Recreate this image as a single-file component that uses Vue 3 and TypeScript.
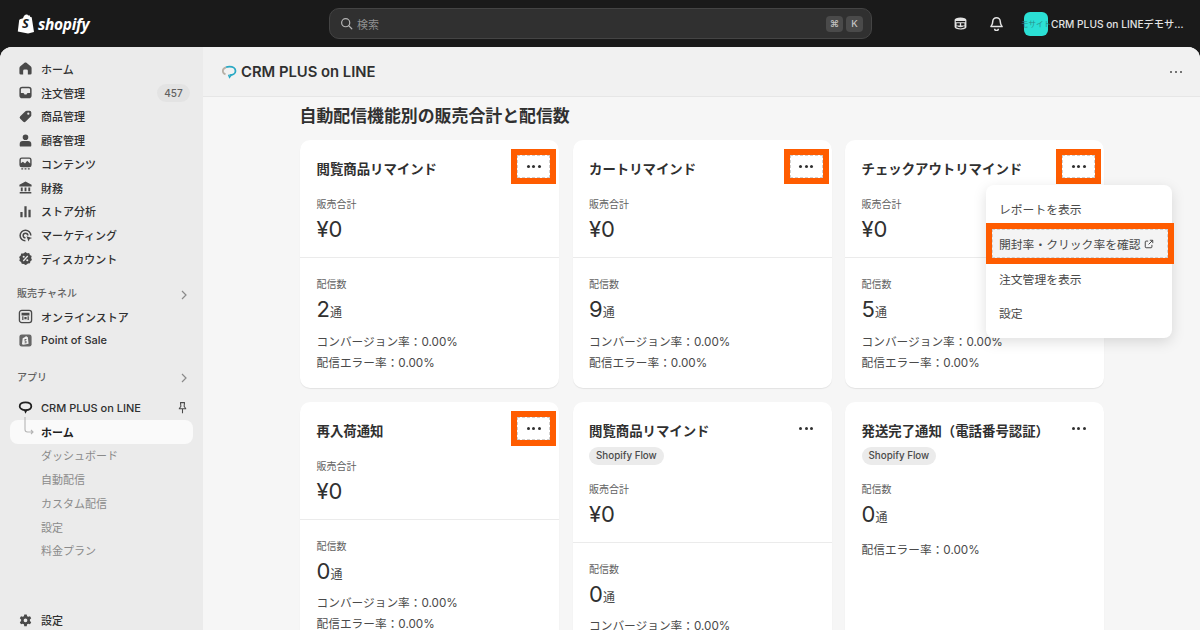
<script setup lang="ts">
interface NavItem { label: string; icon: string; badge?: string }
interface Card {
  title: string
  flow?: boolean
  hl?: boolean
  sales?: boolean
  count: string
  conv?: boolean
  menu?: boolean
}
const icons: Record<string, string> = {
  home: 'M8 1.500c.4 0 .7.1 1 .4l4.500 3.800c.6.5 1 1.200 1 2V13a1.500 1.500 0 0 1-1.500 1.500h-2.500V10.500a1.500 1.500 0 0 0-1.500-1.500H7a1.500 1.500 0 0 0-1.500 1.500v4H3A1.500 1.500 0 0 1 1.500 13V7.700c0-.8.400-1.500 1-2L7 1.900c.3-.3.6-.4 1-.4Z',
  inbox: 'M4.500 1.800h7a3 3 0 0 1 3 3v6.400a3 3 0 0 1-3 3h-7a3 3 0 0 1-3-3V4.800a3 3 0 0 1 3-3Zm0 1.600A1.400 1.400 0 0 0 3.100 4.800v3.700h2.400c.5 0 .9.300 1.100.7l.3.800h2.200l.3-.8c.2-.4.600-.7 1.100-.7h2.400V4.800a1.400 1.400 0 0 0-1.400-1.400Z',
  tag: 'M9.400 1.800h3a1.800 1.800 0 0 1 1.800 1.800v3a2 2 0 0 1-.6 1.400l-5.400 5.400a2 2 0 0 1-2.800 0l-3-3a2 2 0 0 1 0-2.800L7.900 2.400a2 2 0 0 1 1.500-.6Zm1.600 2a1.200 1.200 0 1 0 0 2.400 1.200 1.200 0 0 0 0-2.400Z',
  person: 'M8 1.500a3 3 0 1 1 0 6 3 3 0 0 1 0-6ZM5 8.600h6a3.200 3.200 0 0 1 3.200 3.200v1.400a1.300 1.300 0 0 1-1.300 1.300H3.100a1.300 1.300 0 0 1-1.300-1.300v-1.400A3.200 3.200 0 0 1 5 8.600Z',
  content: 'M4 1.500h8A2.500 2.500 0 0 1 14.500 4v5.500A2.500 2.500 0 0 1 12 12H4a2.500 2.500 0 0 1-2.500-2.500V4A2.500 2.500 0 0 1 4 1.500Zm0 1.500a1 1 0 0 0-1 1v3.800l2.200-1.800 2.300 2 2.300-3L13 8V4a1 1 0 0 0-1-1ZM3.500 13h2v1.500h-2Zm3.500 0h2v1.500H7Zm3.500 0h2v1.500h-2Z',
  bank: 'M8 1.500 14.500 5v1.800h-13V5ZM3 8h2v4H3Zm4 0h2v4H7Zm4 0h2v4h-2ZM1.800 12.800h12.400v1.700H1.800Z',
  chart: 'M2.500 8.500h2.400v5.500H2.500Zm4.300-6h2.400V14H6.800ZM11.100 6h2.400v8h-2.400Z',
  target: 'M8 1.500a6.500 6.500 0 0 1 6.500 6.400h-1.600A4.900 4.900 0 1 0 7.900 12.900v1.600A6.500 6.500 0 0 1 8 1.500Zm0 3.200A3.300 3.300 0 0 1 11.300 8H9.700A1.700 1.700 0 1 0 8 9.700v1.600a3.300 3.300 0 0 1 0-6.600Zm1 4 6 2-2.600 1.100L11.300 14.500Z',
  discount: 'M8 1 9.700 2.400 11.900 2.200 12.700 4.200 14.600 5.300 14 7.500 14.900 9.500 13.200 10.900 12.800 13 10.600 13.200 8.800 14.600 8 15 6.200 13.800 4 13.700 3.300 11.700 1.400 10.500 2 8.300 1.200 6.300 2.900 4.900 3.400 2.700 5.600 2.600ZM6.100 5a1.100 1.100 0 1 0 0 2.200 1.100 1.100 0 0 0 0-2.200Zm3.800 3.800a1.100 1.100 0 1 0 0 2.200 1.100 1.100 0 0 0 0-2.200ZM9.900 4.900 5.100 10.200l1 .9 4.800-5.300Z',
  gear: 'M6.700 1.500h2.600l.4 1.900 1.300.7 1.800-.7 1.300 2.300-1.400 1.300v1.500l1.400 1.300-1.300 2.300-1.800-.7-1.300.7-.4 1.900H6.700l-.4-1.900-1.300-.7-1.800.7-1.300-2.300L3.300 8.500V7L1.900 5.700l1.300-2.300 1.800.7 1.300-.7ZM8 5.800a2 2 0 1 0 0 4 2 2 0 0 0 0-4Z',
}
const mainNav: NavItem[] = [
  { label: 'ホーム', icon: 'home' },
  { label: '注文管理', icon: 'inbox', badge: '457' },
  { label: '商品管理', icon: 'tag' },
  { label: '顧客管理', icon: 'person' },
  { label: 'コンテンツ', icon: 'content' },
  { label: '財務', icon: 'bank' },
  { label: 'ストア分析', icon: 'chart' },
  { label: 'マーケティング', icon: 'target' },
  { label: 'ディスカウント', icon: 'discount' },
]
const subNav = ['ダッシュボード', '自動配信', 'カスタム配信', '設定', '料金プラン']
const cards: Card[] = [
  { title: '閲覧商品リマインド', hl: true, sales: true, count: '2', conv: true },
  { title: 'カートリマインド', hl: true, sales: true, count: '9', conv: true },
  { title: 'チェックアウトリマインド', hl: true, sales: true, count: '5', conv: true, menu: true },
  { title: '再入荷通知', hl: true, sales: true, count: '0', conv: true },
  { title: '閲覧商品リマインド', flow: true, sales: true, count: '0', conv: true },
  { title: '発送完了通知（電話番号認証）', flow: true, count: '0' },
]
</script>

<template>
  <div class="page">
    <header class="topbar">
      <div class="brand">
        <svg class="bag" viewBox="0 0 18 20" width="18" height="20">
          <path fill="#fff" d="M3 5.200 6 4.200C6.500 2 8 .5 9.500.5c1 0 1.400.6 1.700 1l1.200-.2 1 1.600 1.300.4L17 18l-6 1.500L.8 17.500 2.200 6Z" />
        </svg>
        <span class="bag-s">S</span>
        <span class="wordmark">shopify</span>
      </div>
      <div class="search">
        <svg viewBox="0 0 16 16" width="13" height="13" fill="none" stroke="#b5b5b5" stroke-width="1.500">
          <circle cx="7" cy="7" r="5" />
          <path d="m11 11 3.500 3.500" stroke-linecap="round" />
        </svg>
        <span class="search-text">検索</span>
        <span class="keys"><kbd>⌘</kbd><kbd>K</kbd></span>
      </div>
      <div class="top-right">
        <svg class="top-icon" viewBox="0 0 16 16" width="15" height="15">
          <path fill="#e3e3e3" d="M8 1.500c3.600 0 6.300 1 6.300 2.700v7.600c0 1.700-2.700 2.700-6.300 2.700s-6.300-1-6.300-2.700V4.200C1.700 2.500 4.400 1.500 8 1.500Z" />
          <path fill="#1a1a1a" d="M3 5.400h10v1.300H3ZM3.800 7.700h3.500v2.300H3.800Zm4.900 0h3.500v2.300H8.700ZM3.500 11.200l1-.3c1 .7 2.200 1 3.500 1s2.500-.3 3.500-1l1 .3v.8c-1.200.8-2.800 1.200-4.500 1.200s-3.300-.4-4.500-1.200Z" />
        </svg>
        <svg class="top-icon" viewBox="0 0 16 16" width="15" height="15" fill="none" stroke="#e3e3e3" stroke-width="1.600">
          <path d="M8 1.800a4 4 0 0 1 4 4c0 3 .8 4 2 5.500H2c1.200-1.500 2-2.500 2-5.500a4 4 0 0 1 4-4Z" stroke-linejoin="round" />
          <path d="M6 13.500a2 2 0 0 0 4 0" />
        </svg>
        <div class="avatar"><span>モサイト</span></div>
        <span class="store-name">CRM PLUS on LINEデモサイト</span>
      </div>
    </header>

    <div class="shell">
      <aside class="sidebar">
        <a v-for="item in mainNav" :key="item.label" class="row">
          <svg class="nav-icon" viewBox="0 0 16 16" width="15" height="15"><path :d="icons[item.icon]" fill-rule="evenodd" /></svg>
          <span class="row-label">{{ item.label }}</span>
          <span v-if="item.badge" class="badge">{{ item.badge }}</span>
        </a>

        <div class="group first-group">
          <span>販売チャネル</span>
          <svg viewBox="0 0 10 10" width="10" height="10" fill="none" stroke="#8a8a8a" stroke-width="1.200"><path d="m3 1 4 4-4 4" /></svg>
        </div>
        <a class="row">
          <svg class="nav-icon" viewBox="0 0 16 16" width="15" height="15">
            <rect x="1.500" y="1.500" width="13" height="13" rx="2.500" fill="#e8e8e8" stroke="#4a4a4a" stroke-width="1.400" />
            <path fill="#4a4a4a" d="M3.800 4h8.400v2.800H3.800ZM4.500 7.800h1.300v4H4.500Zm5.700 0h1.300v4h-1.300ZM6.800 8.500h2.400v2.300H6.800Z" />
          </svg>
          <span class="row-label">オンラインストア</span>
        </a>
        <a class="row">
          <svg class="nav-icon" viewBox="0 0 16 16" width="15" height="15">
            <rect x="1.500" y="1.500" width="13" height="13" rx="2.500" fill="#666" />
            <path fill="#eee" d="M5 5.500 7.500 4.200c.5-.8 1.500-1 2-.2l1 .4.800 7-5.500 1.200L4.200 12Z" />
            <path fill="#666" d="M7 6.500h2v1H8v1h1v2.500H7v-1h1V9H7Z" />
          </svg>
          <span class="row-label">Point of Sale</span>
        </a>

        <div class="group second-group">
          <span>アプリ</span>
          <svg viewBox="0 0 10 10" width="10" height="10" fill="none" stroke="#8a8a8a" stroke-width="1.200"><path d="m3 1 4 4-4 4" /></svg>
        </div>
        <a class="row app-row">
          <svg class="ring-icon" viewBox="0 0 16 16" width="15" height="15" fill="none" stroke="#1f1f1f" stroke-width="1.900">
            <path d="M8 2.500c3.500 0 6.200 1.500 6.200 4.100S11.500 10.800 8 10.800 1.800 9.200 1.800 6.600 4.500 2.500 8 2.500Z" />
            <path d="M7 10.500 8 13l1.500-2.500" stroke-width="1.400" />
          </svg>
          <span class="row-label">CRM PLUS on LINE</span>
          <svg class="pin" viewBox="0 0 16 16" width="13" height="13" fill="none" stroke="#4a4a4a" stroke-width="1.300">
            <path d="M5.500 2h5l-.5 4.500 2 3H4l2-3ZM8 9.500V15" stroke-linejoin="round" />
          </svg>
        </a>
        <a class="row active">
          <svg class="elbow" viewBox="0 0 24 24" width="24" height="24" fill="none" stroke="#b5b5b5" stroke-width="1.100">
            <path d="M12-3V9.500a2.500 2.500 0 0 0 2.500 2.500H20M18 10l2 2-2 2" />
          </svg>
          <span class="row-label">ホーム</span>
        </a>
        <a v-for="s in subNav" :key="s" class="row sub"><span class="row-label">{{ s }}</span></a>

        <a class="row settings">
          <svg class="nav-icon" viewBox="0 0 16 16" width="15" height="15"><path :d="icons.gear" fill-rule="evenodd" /></svg>
          <span class="row-label">設定</span>
        </a>
      </aside>

      <main class="main">
        <div class="app-head">
          <svg viewBox="0 0 16 16" width="16" height="16" fill="none" stroke-width="1.800">
            <path d="M5 3.300C6 2.800 7 2.600 8.500 2.600c3.300 0 6 1.700 6 4.300 0 2.500-2.700 4.200-6 4.200" stroke="#2aa9c4" />
            <path d="M5 3.300C3 4 1.800 5.300 1.800 6.900c0 1.500 1 2.700 2.700 3.400" stroke="#b8b0a6" />
            <path d="M7.500 10.800 8.500 13.500l1.800-2.500" stroke="#2aa9c4" stroke-width="1.300" />
          </svg>
          <span class="app-title">CRM PLUS on LINE</span>
          <span class="dots head-dots"><i></i><i></i><i></i></span>
        </div>
        <section class="content">
          <h1>自動配信機能別の販売合計と配信数</h1>
          <div class="grid">
            <article v-for="(c, i) in cards" :key="i" class="card">
              <div class="sec top-sec" :class="{ 'no-rule': !c.sales }">
                <h2>{{ c.title }}</h2>
                <span v-if="c.flow" class="chip">Shopify Flow</span>
                <template v-if="c.sales">
                  <p class="label" :class="{ 'flow-label': c.flow }">販売合計</p>
                  <p class="value">¥0</p>
                </template>
              </div>
              <div class="sec bottom-sec" :class="{ merged: !c.sales }">
                <p class="label">配信数</p>
                <p class="value">{{ c.count }}<small>通</small></p>
                <div class="rates">
                  <p v-if="c.conv">コンバージョン率：0.00%</p>
                  <p>配信エラー率：0.00%</p>
                </div>
              </div>

              <button class="more" :class="{ framed: c.hl }" type="button">
                <span class="dots"><i></i><i></i><i></i></span>
              </button>

              <div v-if="c.menu" class="menu">
                <a class="menu-item">レポートを表示</a>
                <a class="menu-item picked">
                  <span class="picked-frame"></span>
                  <span class="picked-text">開封率・クリック率を確認</span>
                  <svg class="ext" viewBox="0 0 12 12" width="10" height="10" fill="none" stroke="#4a4a4a" stroke-width="1.200">
                    <path d="M5 2.500H2.500a1 1 0 0 0-1 1v6a1 1 0 0 0 1 1h6a1 1 0 0 0 1-1V7M7 1.500h3.500V5M10.500 1.500 5.500 6.500" />
                  </svg>
                </a>
                <a class="menu-item">注文管理を表示</a>
                <a class="menu-item">設定</a>
              </div>
            </article>
          </div>
        </section>
      </main>
    </div>
  </div>
</template>

<style>
html, body { margin: 0; background: #1a1a1a; }
</style>

<style scoped>
* { box-sizing: border-box; }
p, h1, h2 { margin: 0; }
.page {
  width: 1200px; height: 630px; overflow: hidden; display: flex; flex-direction: column;
  background: #1a1a1a; color: #303030;
  font-family: Inter, "Noto Sans CJK JP", sans-serif;
}
.topbar { height: 47px; flex: none; display: flex; align-items: center; position: relative; }
.brand { width: 329px; padding-left: 17px; display: flex; align-items: center; position: relative; }
.bag { flex: none; }
.bag-s {
  position: absolute; left: 22px; top: 1px; font: italic 700 13px "Open Sans", sans-serif; color: #1a1a1a;
}
.wordmark {
  margin-left: 3px; color: #fff; font: italic 700 15.500px "Open Sans", sans-serif; letter-spacing: -.3px;
}
.search {
  width: 543px; height: 31px; background: #303030; border: 1px solid #444; border-radius: 10px;
  display: flex; align-items: center; padding: 0 8px 0 10px;
}
.search-text { margin-left: 4px; font-size: 11px; color: #8f8f8f; }
.keys { margin-left: auto; display: flex; gap: 3px; }
kbd {
  width: 17px; height: 16px; border-radius: 4px; background: #4a4a4a; color: #c4c4c4;
  font: 500 9.500px Inter, "DejaVu Sans", sans-serif; display: flex; align-items: center; justify-content: center;
}
.top-right { display: flex; align-items: center; flex: 1; padding-left: 81px; }
.top-icon { flex: none; }
.top-icon + .top-icon { margin-left: 21px; }
.avatar {
  margin-left: 20px; width: 24px; height: 24px; border-radius: 6px; background: #2be0d5; flex: none;
  display: flex; align-items: center; justify-content: center; overflow: visible; white-space: nowrap;
}
.avatar span { font-size: 7.500px; color: #2a8f8a; }
.store-name {
  margin-left: 3px; width: 135px; font-size: 10.200px; font-weight: 500; color: #e3e3e3;
  white-space: nowrap; overflow: hidden; text-overflow: ellipsis;
}

.shell {
  flex: 1; min-height: 0; display: flex; overflow: hidden; border-radius: 12px 12px 0 0;
  background: #f6f6f6; box-shadow: inset 0 1px 0 #cfcfcf;
}
.sidebar {
  width: 203px; flex: none; background: #ebebeb; padding-top: 10px; display: flex; flex-direction: column;
}
.row {
  height: 23.750px; flex: none; margin: 0 10px; padding-left: 7.500px; display: flex; align-items: center;
  font-size: 11px; font-weight: 500; color: #303030; border-radius: 8px; position: relative;
}
.nav-icon { flex: none; fill: #4a4a4a; }
.ring-icon { flex: none; }
.row-label { position: absolute; left: 31px; white-space: nowrap; }
.badge {
  margin-left: auto; margin-right: 3px; width: 33px; height: 18px; border-radius: 9px; background: #e3e3e3;
  font-size: 10px; color: #616161; display: flex; align-items: center; justify-content: center;
}
.group {
  height: 24px; flex: none; padding: 0 14px 0 17px; display: flex; align-items: center; justify-content: space-between;
  font-size: 10px; font-weight: 500; color: #616161;
}
.group svg { margin-top: 4px; }
.first-group { margin-top: 10px; }
.second-group { margin-top: 12px; }
.app-row { margin-top: 7.500px; }
.pin { margin-left: auto; margin-right: 4px; }
.active { background: #fafafa; font-weight: 700; color: #1f1f1f; height: 24px; }
.elbow { position: absolute; left: 3px; top: 0; overflow: visible; }
.sub { font-weight: 400; color: #8a8a8a; }
.settings { margin-top: auto; margin-bottom: -2px; }

.main { flex: 1; min-width: 0; display: flex; flex-direction: column; }
.app-head {
  height: 50px; flex: none; display: flex; align-items: center; padding: 1px 18px 0 18px;
  background: #f1f1f1; border-bottom: 1px solid #e6e6e6;
}
.app-title { margin-left: 4px; font-size: 14.800px; font-weight: 600; color: #303030; }
.head-dots { margin-left: auto; }
.dots { display: inline-flex; gap: 2.500px; align-items: center; }
.dots i { width: 3px; height: 3px; border-radius: 50%; background: #303030; display: block; }
.head-dots i { background: #4a4a4a; width: 2.500px; height: 2.500px; }
.content { width: 804px; margin: 0 auto; padding-top: 7px; position: relative; left: .5px; }
h1 { font-size: 16.900px; line-height: 24px; font-weight: 600; color: #303030; margin-bottom: 12px; margin-left: -.5px; }
.grid { display: grid; grid-template-columns: repeat(3, 259px); gap: 13.500px; }
.card {
  background: #fff; border-radius: 10px; position: relative; box-shadow: 0 1px 1px rgba(0, 0, 0, .08);
  display: flex; flex-direction: column;
}
.sec { padding: 0 16.500px; }
.top-sec { padding-top: 18px; padding-bottom: 13px; border-bottom: 1px solid #ebebeb; }
.top-sec.no-rule { border-bottom: 0; padding-bottom: 0; }
h2 { font-size: 13.400px; line-height: 22px; font-weight: 600; color: #303030; white-space: nowrap; }
.chip {
  display: inline-flex; align-items: center; height: 18px; margin-top: 5px; padding: 0 7px; border-radius: 9px;
  background: #ebebeb; font-size: 9.800px; font-weight: 500; color: #4a4a4a;
}
.label { font-size: 10px; line-height: 16px; color: #616161; margin-top: 16px; }
.value { font-size: 22px; line-height: 30px; height: 30px; margin-top: 2px; color: #303030; display: flex; align-items: baseline; }
.value small { font-size: 12px; line-height: 1; color: #4a4a4a; }
.bottom-sec { padding-top: 18px; padding-bottom: 14.500px; }
.bottom-sec .label { margin-top: 0; }
.bottom-sec.merged { padding-top: 16px; }
.rates { margin-top: 7.500px; font-size: 11.700px; line-height: 21px; color: #4a4a4a; }
.merged .rates { margin-top: 11px; }
.more {
  position: absolute; top: 9px; right: 3px; width: 45px; height: 35px; padding: 0; background: transparent;
  border: 6px solid transparent; display: flex; align-items: center; justify-content: center;
}
.framed { background: #fff; border-color: #ff5c00; outline: 1px dashed #cfcfcf; outline-offset: -7px; }
.menu {
  position: absolute; left: 141px; top: 45px; width: 186px; height: 153px; padding: 6.500px 0; background: #fff;
  border-radius: 8px; box-shadow: 0 4px 14px rgba(0, 0, 0, .13); z-index: 2; display: flex; flex-direction: column;
}
.menu-item {
  height: 34.700px; flex: none; padding-left: 13px; display: flex; align-items: center; position: relative;
  font-size: 11.800px; color: #4a4a4a; white-space: nowrap;
}
.picked-frame {
  position: absolute; left: 0; right: -2px; top: -3px; bottom: -3px; background: #f4f4f4;
  border: 6px solid #ff5c00; outline: 1px dashed #cfcfcf; outline-offset: -7px;
}
.picked-text, .ext { position: relative; }
.ext { margin-left: 3px; }
</style>
